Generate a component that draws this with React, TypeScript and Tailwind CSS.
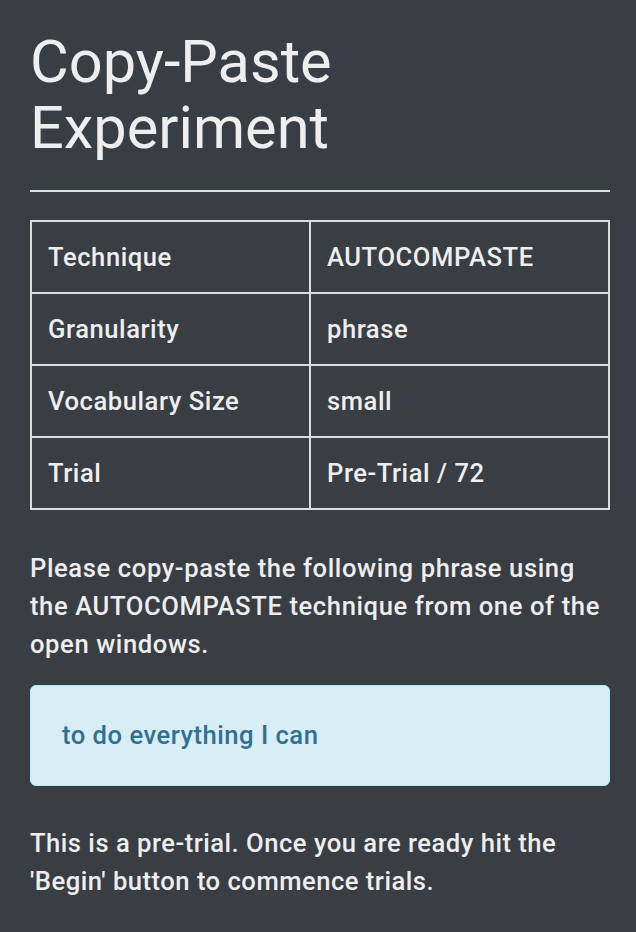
import React from "react";

const rows: [string, string][] = [
  ["Technique", "AUTOCOMPASTE"],
  ["Granularity", "phrase"],
  ["Vocabulary Size", "small"],
  ["Trial", "Pre-Trial / 72"],
];

export default function App() {
  return (
    <div
      className="min-h-[932px] w-full bg-[#393d44] text-[#eeeeee]"
      style={{ fontFamily: "Roboto, 'Noto Sans', sans-serif" }}
    >
      <div className="ml-[30px] w-[580px] pt-[29px]">
        <h1 className="text-[59.5px] leading-[66px] font-normal">
          Copy-Paste
          <br />
          Experiment
        </h1>
        <hr className="mt-[29px] border-0 border-t-2 border-[#dddddd]" />
        <table className="mt-[28px] w-[580px] table-fixed border-collapse text-[25.6px] leading-[38px] font-medium tracking-[0.55px]">
          <colgroup>
            <col className="w-[279px]" />
            <col />
          </colgroup>
          <tbody>
            {rows.map(([k, v]) => (
              <tr key={k}>
                <td className="border-2 border-[#dddddd] px-[16px] py-[16px] align-top">{k}</td>
                <td className="border-2 border-[#dddddd] px-[16px] py-[16px] align-top">{v}</td>
              </tr>
            ))}
          </tbody>
        </table>
        <p className="mt-[39px] text-[25.6px] leading-[38px] font-medium tracking-[0.6px]">
          Please copy-paste the following phrase using the AUTOCOMPASTE technique from one of the open windows.
        </p>
        <div className="mt-[22px] h-[101px] rounded-[6px] border border-[#bce8f1] bg-[#d9edf7] px-[31px] py-[30px] text-[25.6px] leading-[38px] font-medium tracking-[0.5px] text-[#31708f]">
          to do everything I can
        </div>
        <p className="mt-[38px] text-[25.6px] leading-[38px] font-medium tracking-[0.5px]">
          This is a pre-trial. Once you are ready hit the 'Begin' button to commence trials.
        </p>
      </div>
    </div>
  );
}
